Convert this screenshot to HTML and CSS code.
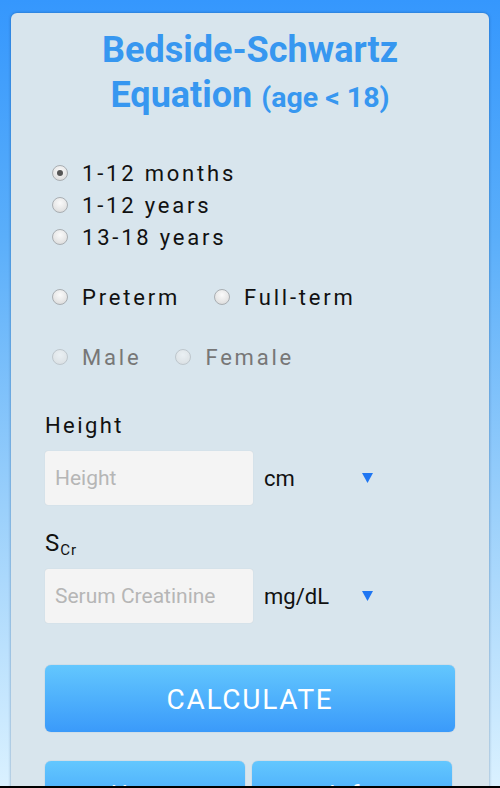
FILE: index.html
```html
<!DOCTYPE html>
<html>
<head>
<meta charset="utf-8">
<link rel="stylesheet" href="styles.css">
</head>
<body>
<div class="screen">
  <div class="card">
    <h1 class="title">Bedside-Schwartz<br>Equation <span class="age">(age &lt; 18)</span></h1>

    <div class="group group-age">
      <div class="radio-row"><span class="radio checked"></span><span class="rlabel">1-12 months</span></div>
      <div class="radio-row"><span class="radio"></span><span class="rlabel">1-12 years</span></div>
      <div class="radio-row"><span class="radio"></span><span class="rlabel">13-18 years</span></div>
    </div>

    <div class="group group-term">
      <div class="radio-row inline">
        <span class="opt"><span class="radio"></span><span class="rlabel">Preterm</span></span>
        <span class="opt"><span class="radio"></span><span class="rlabel">Full-term</span></span>
      </div>
    </div>

    <div class="group group-sex">
      <div class="radio-row inline disabled">
        <span class="opt"><span class="radio"></span><span class="rlabel">Male</span></span>
        <span class="opt"><span class="radio"></span><span class="rlabel">Female</span></span>
      </div>
    </div>

    <div class="field-label height-label">Height</div>
    <div class="field-row">
      <div class="input"><span class="placeholder">Height</span></div>
      <div class="select"><span class="unit">cm</span><svg class="tri" width="11" height="10" viewBox="0 0 11 10"><path d="M0 0H11L5.5 10Z" fill="#1f76f2"/></svg></div>
    </div>

    <div class="field-label scr-label">S<span class="sub">Cr</span></div>
    <div class="field-row">
      <div class="input"><span class="placeholder">Serum Creatinine</span></div>
      <div class="select"><span class="unit">mg/dL</span><svg class="tri" width="11" height="10" viewBox="0 0 11 10"><path d="M0 0H11L5.5 10Z" fill="#1f76f2"/></svg></div>
    </div>

    <div class="btn calc">CALCULATE</div>

    <div class="bottom-btns">
      <div class="btn small">Home</div>
      <div class="btn small">Info</div>
    </div>
  </div>
</div>
</body>
</html>
```
FILE: styles.css
```css
html, body {
  margin: 0;
  padding: 0;
}
body {
  width: 500px;
  height: 788px;
  overflow: hidden;
  background: #000;
  font-family: Roboto, "Liberation Sans", sans-serif;
}
.screen {
  height: 786px;
  overflow: hidden;
  background: linear-gradient(to bottom, #3597fd 0%, #5aaefa 30%, #9bd0fb 65%, #daf1ff 100%);
  padding: 13px 11px 0;
  box-sizing: border-box;
}
.card {
  background: #d8e5ed;
  border-radius: 6px 6px 0 0;
  box-shadow: 0 0 3px rgba(0, 40, 90, 0.45);
  height: 900px;
  padding: 15px 34px 0;
  box-sizing: border-box;
}
.title {
  margin: 0;
  text-align: center;
  font-size: 36px;
  line-height: 45px;
  font-weight: 700;
  color: #3797f0;
}
.age {
  font-size: 28.5px;
}
.group-age {
  margin-top: 37px;
}
.group-term {
  margin-top: 28px;
}
.group-sex {
  margin-top: 28px;
}
.radio-row {
  height: 32px;
  display: flex;
  align-items: center;
  padding-left: 7px;
}
.opt {
  display: flex;
  align-items: center;
  margin-right: 34px;
}
.radio {
  width: 14px;
  height: 14px;
  border-radius: 50%;
  border: 1px solid #a9aeb2;
  background: radial-gradient(circle at 50% 35%, #fafafa 0%, #e6e6e6 60%, #d2d2d2 100%);
  box-sizing: content-box;
  flex: none;
  position: relative;
}
.radio.checked::after {
  content: "";
  position: absolute;
  left: 4px;
  top: 4px;
  width: 6px;
  height: 6px;
  border-radius: 50%;
  background: #555;
}
.rlabel {
  margin-left: 14px;
  font-size: 22px;
  letter-spacing: 2.8px;
  color: #111;
}
.disabled .radio {
  opacity: 0.55;
}
.disabled .rlabel {
  color: #777;
}
.field-label {
  font-size: 22px;
  line-height: 26px;
  letter-spacing: 2.4px;
  color: #111;
}
.height-label {
  margin-top: 40px;
}
.scr-label {
  margin-top: 25px;
  font-size: 24px;
  letter-spacing: 0;
}
.sub {
  font-size: 15px;
  line-height: 0;
  letter-spacing: 1px;
  vertical-align: -4px;
  margin-left: 1px;
}
.field-row {
  display: flex;
  align-items: center;
  margin-top: 12px;
}
.scr-label + .field-row {
  margin-top: 13px;
}
.input {
  width: 208px;
  height: 54px;
  background: #f4f4f4;
  border-radius: 3px;
  box-shadow: 0 0 1px rgba(0,0,0,0.15);
  display: flex;
  align-items: center;
  padding-left: 10px;
  box-sizing: border-box;
}
.placeholder {
  font-size: 21px;
  color: #b6b6b6;
}
.select {
  width: 109px;
  margin-left: 11px;
  display: flex;
  align-items: center;
  justify-content: space-between;
}
.unit {
  font-size: 22px;
  color: #111;
}
.tri {
  display: block;
}
.btn {
  background: linear-gradient(to bottom, #63c7fe 0%, #3a9afa 100%);
  border-radius: 6px;
  color: #fff;
  text-align: center;
  box-shadow: 0 0 1px rgba(0, 60, 140, 0.4);
}
.calc {
  margin-top: 42px;
  height: 67px;
  line-height: 69px;
  font-size: 28px;
  letter-spacing: 1.7px;
}
.bottom-btns {
  display: flex;
  gap: 7px;
  margin-top: 29px;
}
.small {
  width: 200px;
  height: 60px;
  line-height: 60px;
  font-size: 24px;
  padding-top: 3px;
  box-sizing: content-box;
  letter-spacing: 1px;
}
```
